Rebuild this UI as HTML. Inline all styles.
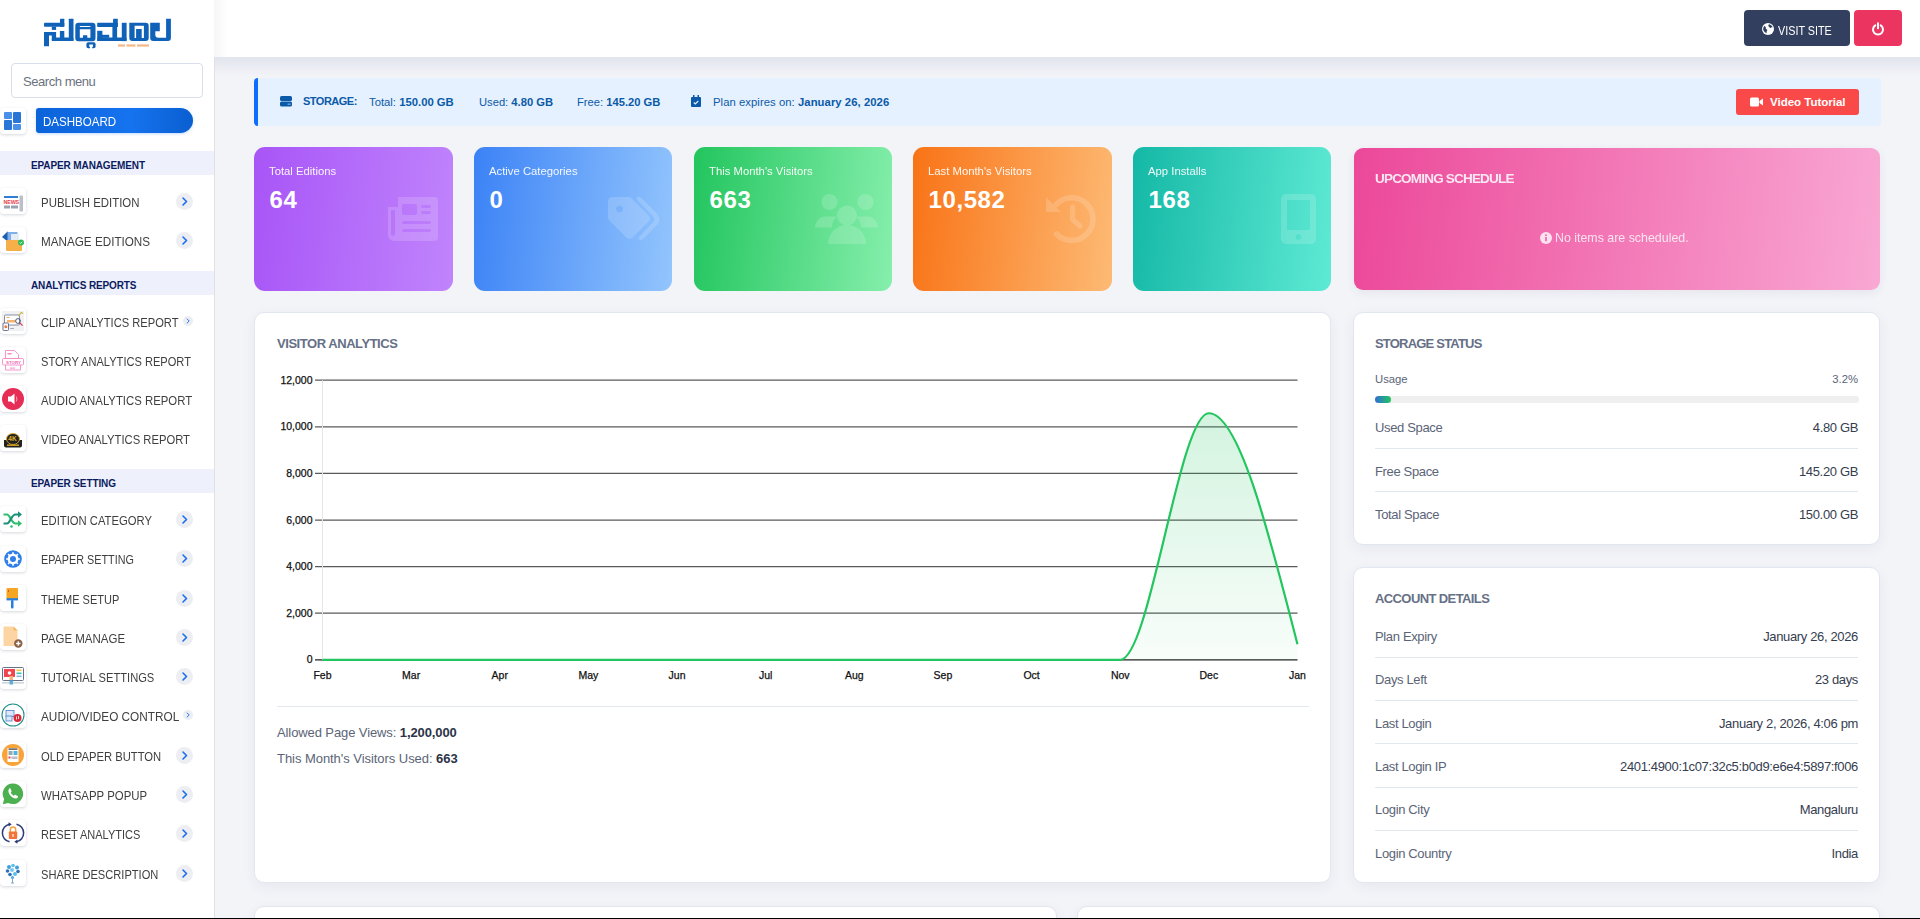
<!DOCTYPE html><html><head><meta charset="utf-8"><style>
*{box-sizing:border-box;margin:0;padding:0}
html,body{width:1920px;height:919px;overflow:hidden;background:#f3f4f8;font-family:"Liberation Sans",sans-serif}
body{position:relative}
.a{position:absolute}
.nw{white-space:nowrap}
#sb{position:absolute;left:0;top:0;width:215px;height:919px;background:#fff;border-right:1px solid #e0e1e5}
#search{position:absolute;left:11px;top:63px;width:192px;height:35px;border:1px solid #d8deea;border-radius:4px;background:#fff;font-size:13px;color:#6b7280;padding-left:11px;line-height:35px;letter-spacing:-0.45px}
.ico{position:absolute;left:0;width:26px;height:26px;background:#fff;border-radius:4px;box-shadow:0 1px 3px rgba(30,40,70,.18)}
.ico svg{position:absolute;left:0;top:0}
.mi{position:absolute;left:41px;font-size:13px;color:#3f3f3f;letter-spacing:0;white-space:nowrap;line-height:16px;transform:scaleX(.86);transform-origin:0 0}
.chev{position:absolute;border-radius:50%;background:#eceef2}
.chev svg{position:absolute;left:0;top:0}
.band{position:absolute;left:0;width:214px;height:24px;background:#eef1fb}
.band span{position:absolute;left:31px;top:9px;font-size:10px;font-weight:bold;color:#0b1b5e;letter-spacing:-0.12px;line-height:12px;white-space:nowrap}
#hdr{position:absolute;left:214px;top:0;width:1706px;height:57px;background:linear-gradient(90deg,#f6f6f7,#fff 14px);z-index:2}
#hdrsh{position:absolute;left:215px;top:57px;width:1705px;height:20px;background:linear-gradient(#e1e5ed,rgba(243,244,248,0));z-index:2}
.btn{position:absolute;border-radius:4px;color:#fff}
.card{position:absolute;background:#fff;border-radius:10px;border:1px solid #e1e6ef;box-shadow:0 4px 14px rgba(40,50,90,.06)}
.stat{position:absolute;top:147px;height:144px;border-radius:11px;color:#fff;overflow:hidden}
.stat .lbl{position:absolute;left:15px;top:18px;font-size:11.3px;line-height:13px;opacity:.93;white-space:nowrap}
.stat .num{position:absolute;left:15.5px;top:184px;font-size:24px;font-weight:bold;line-height:28px;white-space:nowrap;letter-spacing:.6px}
.ttl{position:absolute;font-size:13px;font-weight:bold;color:#667086;letter-spacing:-0.35px;white-space:nowrap;line-height:15px}
.row{position:absolute;left:21px;right:21px;height:16px;font-size:13px;line-height:16px;white-space:nowrap}
.row .l{position:absolute;left:0;top:0;color:#5b6477;letter-spacing:-0.35px}
.row .r{position:absolute;right:0;top:0;color:#353d4f;letter-spacing:-0.35px}
.div{position:absolute;left:21px;right:21px;height:1px;background:#e3e8ef}
</style></head><body>
<div id="hdrsh"></div><div id="hdr">
<div class="btn" style="left:1530px;top:10px;width:106px;height:36px;background:#333f5e;">
<svg class="a" style="left:18px;top:13px" width="12" height="12" viewBox="0 0 12 12"><circle cx="6" cy="6" r="6" fill="#fff"/><path d="M2.3 3.0c1 .3 1.7.9 1.5 1.9-.2.8.6 1.3 1.2 1.6.5.3.3 1.3-.2 1.8-.4.5-.3 1.2 0 1.9C3.2 9.7 1.9 8.4 1.2 6.7 1.1 5.4 1.5 4.1 2.3 3.0zM7.2 1.2c1.6.4 2.9 1.6 3.5 3.2-.6-.2-1.3-.1-1.7.4-.5.5-1.3.2-1.5-.5-.2-.6-.9-.8-1.1-1.4-.2-.7.2-1.3.8-1.7z" fill="#333f5e"/></svg>
<span class="a nw" style="left:34px;top:12.5px;font-size:13px;line-height:15px;transform:scaleX(.83);transform-origin:0 0">VISIT SITE</span></div>
<div class="btn" style="left:1640px;top:10px;width:48px;height:36px;background:#eb3460;">
<svg class="a" style="left:17px;top:12px" width="14" height="14" viewBox="0 0 14 14"><path d="M4.3 3.3A5 5 0 1 0 9.7 3.3" fill="none" stroke="#fff" stroke-width="2" stroke-linecap="round"/><path d="M7 1.3V6.3" stroke="#fff" stroke-width="2" stroke-linecap="round"/></svg></div>
</div>
<div id="sb">
<svg class="a" style="left:0;top:0" width="214" height="56" viewBox="0 0 214 56"><g fill="#0f62b8">
<rect x="44" y="22.8" width="20.3" height="4" rx="0.8"/><rect x="60" y="18.8" width="4.3" height="8" rx="0.5"/><rect x="51.8" y="26.5" width="4.3" height="3.4"/>
<rect x="68.8" y="18.8" width="4.7" height="22.2" rx="0.5"/><rect x="44" y="32" width="5" height="14.2" rx="0.5"/><rect x="44" y="32" width="12" height="3.6" rx="1.5"/>
<rect x="51.8" y="32" width="4.3" height="9"/><rect x="51.8" y="37.6" width="21.7" height="3.4" rx="1.2"/><rect x="59.9" y="31" width="4.4" height="10"/>
<path d="M78.3 22.8h14a3.2 3.2 0 0 1 3.2 3.2v12.2a3 3 0 0 1-3 3h-14.2a3 3 0 0 1-3-3V26a3.2 3.2 0 0 1 3.2-3.2zM79.8 29.3v8.4h3.2v-2.5h4.3v2.5h3.1v-8.4zM79.8 25.9v1.1h10.6v-1.1z" fill-rule="evenodd"/>
<path d="M88.2 42.2h5.6a1.8 1.8 0 0 1 1.8 1.8v2.5a1.8 1.8 0 0 1-1.8 1.8h-1.6v-1.5h0.8v-2.3h-3.8v2.3h0.8v1.5h-1.8a1.8 1.8 0 0 1-1.8-1.8v-2.5a1.8 1.8 0 0 1 1.8-1.8z"/>
<rect x="97.2" y="22.8" width="20.6" height="4.1" rx="0.6"/><rect x="113.1" y="18.8" width="4.7" height="8.2" rx="0.5"/><rect x="97.2" y="30.8" width="5.2" height="10.2"/>
<rect x="101.5" y="34.8" width="7.7" height="3"/><rect x="112.4" y="26" width="4.7" height="12"/><rect x="97.2" y="37.6" width="29.4" height="3.4" rx="1.5"/>
<rect x="121.8" y="22.8" width="4.8" height="18.3"/><path d="M129.3 22.8h16.4a3 3 0 0 1 3 3V38a3 3 0 0 1-3 3h-13.4a3 3 0 0 1-3-3z M134.6 25.7v12.2h1.5V29h5.6v8.9h2.2V25.7z" fill-rule="evenodd"/>
<path d="M150.2 22.8h9.6v8.4h-4.5v3.6a3 3 0 0 0 3 3h7.8V18.8h4.8V38a3 3 0 0 1-3 3h-14.7a3 3 0 0 1-3-3z"/>
</g><g fill="#f28a3a" opacity="0.6"><rect x="118" y="44.4" width="7" height="2.2"/><rect x="126.5" y="44.4" width="9" height="2.2"/><rect x="137" y="44.4" width="12" height="2.2"/></g></svg>
<div id="search">Search menu</div>
<div class="ico" style="top:108px"><svg width="26" height="26" viewBox="0 0 26 26">
<rect x="4" y="4" width="8" height="7" rx="1" fill="#4a90e8"/><rect x="4" y="12" width="8" height="10" rx="1" fill="#2a76d6"/>
<rect x="13" y="4" width="8" height="11" rx="1" fill="#2a76d6"/><rect x="13" y="16" width="8" height="6" rx="1" fill="#4a90e8"/></svg></div>
<div class="a" style="left:36px;top:108px;width:157px;height:25px;border-radius:3px 13px 13px 3px;background:linear-gradient(90deg,#0b63d8,#1673ef 60%,#0a5fd0);box-shadow:0 1px 3px rgba(13,110,253,.25)"></div>
<div class="mi" style="left:43px;top:114px;color:#fff;transform:scaleX(.888)">DASHBOARD</div>
<div class="band" style="top:151px"><span>EPAPER MANAGEMENT</span></div>
<div class="band" style="top:271px"><span>ANALYTICS REPORTS</span></div>
<div class="band" style="top:469px"><span>EPAPER SETTING</span></div>
<div class="ico" style="top:188px"><svg width="26" height="26" viewBox="0 0 26 26"><rect x="4" y="8" width="14" height="2" fill="#2f7fd6"/><text x="3.6" y="15.6" font-family="Liberation Sans" font-weight="bold" font-size="5.4" fill="#e8404a" letter-spacing="-0.2">NEWS</text>
<rect x="4" y="17.5" width="6" height="3" fill="#9aa3ad"/><rect x="11" y="17.5" width="7" height="3" fill="#9aa3ad"/><rect x="19.5" y="7.5" width="3.5" height="16" rx="0.8" fill="#b9c0c9"/></svg></div>
<div class="mi" style="top:195.05px;transform:scaleX(0.88)">PUBLISH EDITION</div>
<div class="chev" style="left:176px;top:192.80px;width:17px;height:17px"><svg width="17" height="17" viewBox="0 0 17 17"><path d="M7 5l3.5 3.5L7 12" fill="none" stroke="#1a6ef0" stroke-width="1.6" stroke-linecap="round" stroke-linejoin="round"/></svg></div>
<div class="ico" style="top:227px"><svg width="26" height="26" viewBox="0 0 26 26"><path d="M2 10l5.5-5.5L12 9l-5 5z" fill="#1f5fb0"/><rect x="7.5" y="5" width="10" height="9" fill="#7fb0ea"/><rect x="11" y="7" width="8" height="8" fill="#e4ecf6"/>
<rect x="6" y="13" width="16" height="11" rx="1.2" fill="#f5b04a"/><circle cx="21" cy="15.5" r="3" fill="#2dbb55"/><path d="M19.6 15.5l1 1 1.8-1.8" stroke="#fff" stroke-width="0.9" fill="none"/></svg></div>
<div class="mi" style="top:234.25px;transform:scaleX(0.899)">MANAGE EDITIONS</div>
<div class="chev" style="left:176px;top:232.00px;width:17px;height:17px"><svg width="17" height="17" viewBox="0 0 17 17"><path d="M7 5l3.5 3.5L7 12" fill="none" stroke="#1a6ef0" stroke-width="1.6" stroke-linecap="round" stroke-linejoin="round"/></svg></div>
<div class="ico" style="top:308px"><svg width="26" height="26" viewBox="0 0 26 26"><rect x="2" y="3" width="22" height="20" fill="#f0f1f3"/><rect x="4.5" y="7" width="15" height="10" rx="1" fill="#fff" stroke="#6a7390" stroke-width="0.8"/><rect x="6.5" y="9" width="3" height="1" fill="#f4a953"/><rect x="7" y="12" width="8" height="2.5" fill="#f7b36a"/>
<rect x="3" y="15" width="5.5" height="7.5" rx="1" fill="#fff" stroke="#4a5688" stroke-width="0.8"/><circle cx="5.8" cy="18.8" r="1.5" fill="#f07a3a"/><circle cx="18" cy="13" r="2.4" fill="none" stroke="#3b4a6a" stroke-width="0.9"/><path d="M19.8 14.8l2.8 2.8" stroke="#e0334a" stroke-width="1.2"/><path d="M18.5 8l2.8-3.5 1.7 1" stroke="#c9b23a" stroke-width="1.2" fill="none"/><rect x="10" y="20" width="4" height="0.8" fill="#99a"/></svg></div>
<div class="mi" style="top:315.05px;transform:scaleX(0.857)">CLIP ANALYTICS REPORT</div>
<div class="chev" style="left:182.5px;top:316.30px;width:10px;height:10px"><svg width="10" height="10" viewBox="0 0 17 17"><path d="M7 5l3.5 3.5L7 12" fill="none" stroke="#1a6ef0" stroke-width="1.6" stroke-linecap="round" stroke-linejoin="round"/></svg></div>
<div class="ico" style="top:347px"><svg width="26" height="26" viewBox="0 0 26 26"><path d="M5.5 3.5h9l4 4v4h-13z" fill="none" stroke="#f28bc6" stroke-width="0.9"/><rect x="7.5" y="6" width="4" height="1.5" fill="#f28bc6"/>
<rect x="2.5" y="11.5" width="21" height="6.5" rx="1" fill="none" stroke="#f28bc6" stroke-width="0.9"/><text x="6" y="16.6" font-family="Liberation Sans" font-weight="bold" font-size="4.4" fill="#ee6bb3">STORY</text>
<path d="M5.5 18v5h15v-5" fill="none" stroke="#f28bc6" stroke-width="0.9"/><rect x="10" y="20.6" width="5" height="1" fill="#f28bc6"/></svg></div>
<div class="mi" style="top:354.25px;transform:scaleX(0.853)">STORY ANALYTICS REPORT</div>
<div class="ico" style="top:386px"><svg width="26" height="26" viewBox="0 0 26 26"><circle cx="13" cy="13" r="11" fill="#e52d56"/><rect x="8" y="10.5" width="3" height="5" fill="#fff"/><path d="M11 10.5l3.5-3v11l-3.5-3z" fill="#fff"/><path d="M16.3 10.5q1.3 2.5 0 5" stroke="#f5b0c0" stroke-width="0.9" fill="none"/></svg></div>
<div class="mi" style="top:393.45px;transform:scaleX(0.874)">AUDIO ANALYTICS REPORT</div>
<div class="ico" style="top:425px"><svg width="26" height="26" viewBox="0 0 26 26"><path d="M4 15h18v5.5a2 2 0 0 1-2 2H6a2 2 0 0 1-2-2z" fill="#222"/><ellipse cx="13" cy="14" rx="6.5" ry="5.5" fill="#222" stroke="#d7a623" stroke-width="0.9"/>
<text x="8.3" y="16.3" font-family="Liberation Sans" font-weight="bold" font-size="6.5" fill="#e8b52a">4K</text><rect x="7" y="19.5" width="12" height="1.4" fill="#d7a623"/></svg></div>
<div class="mi" style="top:432.15px;transform:scaleX(0.865)">VIDEO ANALYTICS REPORT</div>
<div class="ico" style="top:506px"><svg width="26" height="26" viewBox="0 0 26 26"><path d="M3.5 8.5h3.5c3 0 4.5 9 8.5 9h3" stroke="#2cc06a" stroke-width="2.2" fill="none"/><path d="M3.5 17.5h3.5c3 0 4.5-9 8.5-9h3" stroke="#1e8f7a" stroke-width="2.2" fill="none"/>
<path d="M18 5.2l4 3.3-4 3.3z" fill="#1e8f7a"/><path d="M18 14.2l4 3.3-4 3.3z" fill="#2cc06a"/><circle cx="11.5" cy="20.5" r="1.3" fill="#2cc06a"/></svg></div>
<div class="mi" style="top:513.35px;transform:scaleX(0.866)">EDITION CATEGORY</div>
<div class="chev" style="left:176px;top:511.10px;width:17px;height:17px"><svg width="17" height="17" viewBox="0 0 17 17"><path d="M7 5l3.5 3.5L7 12" fill="none" stroke="#1a6ef0" stroke-width="1.6" stroke-linecap="round" stroke-linejoin="round"/></svg></div>
<div class="ico" style="top:546px"><svg width="26" height="26" viewBox="0 0 26 26"><circle cx="13" cy="13" r="8.8" fill="#2f7fe8"/><path d="M18.11,11.25 L18.33,12.16 L19.86,12.24 L19.86,13.76 L18.33,13.84 L18.11,14.75 L17.85,15.38 L17.37,16.17 L18.38,17.31 L17.31,18.38 L16.17,17.37 L15.38,17.85 L14.75,18.11 L13.84,18.33 L13.76,19.86 L12.24,19.86 L12.16,18.33 L11.25,18.11 L10.62,17.85 L9.83,17.37 L8.69,18.38 L7.62,17.31 L8.63,16.17 L8.15,15.38 L7.89,14.75 L7.67,13.84 L6.14,13.76 L6.14,12.24 L7.67,12.16 L7.89,11.25 L8.15,10.62 L8.63,9.83 L7.62,8.69 L8.69,7.62 L9.83,8.63 L10.62,8.15 L11.25,7.89 L12.16,7.67 L12.24,6.14 L13.76,6.14 L13.84,7.67 L14.75,7.89 L15.38,8.15 L16.17,8.63 L17.31,7.62 L18.38,8.69 L17.37,9.83 L17.85,10.62Z" fill="#fff"/><circle cx="13" cy="13" r="3" fill="#2f7fe8"/></svg></div>
<div class="mi" style="top:552.45px;transform:scaleX(0.831)">EPAPER SETTING</div>
<div class="chev" style="left:176px;top:550.20px;width:17px;height:17px"><svg width="17" height="17" viewBox="0 0 17 17"><path d="M7 5l3.5 3.5L7 12" fill="none" stroke="#1a6ef0" stroke-width="1.6" stroke-linecap="round" stroke-linejoin="round"/></svg></div>
<div class="ico" style="top:585px"><svg width="26" height="26" viewBox="0 0 26 26"><rect x="6.5" y="3" width="11.5" height="11" rx="1" fill="#f5a623"/><rect x="6.5" y="13.2" width="11.5" height="2.2" fill="#2a7de0"/><rect x="11" y="15" width="2.5" height="8.5" rx="1" fill="#2a7de0"/><rect x="8" y="5" width="0.8" height="2" fill="#d0452f"/></svg></div>
<div class="mi" style="top:592.35px;transform:scaleX(0.847)">THEME SETUP</div>
<div class="chev" style="left:176px;top:590.10px;width:17px;height:17px"><svg width="17" height="17" viewBox="0 0 17 17"><path d="M7 5l3.5 3.5L7 12" fill="none" stroke="#1a6ef0" stroke-width="1.6" stroke-linecap="round" stroke-linejoin="round"/></svg></div>
<div class="ico" style="top:624px"><svg width="26" height="26" viewBox="0 0 26 26"><path d="M3.5 2.5h10l4 4v15.5h-14z" fill="#fdd4a4"/><path d="M13.5 2.5l4 4h-4z" fill="#f7b35f"/><circle cx="18.3" cy="19.5" r="4.2" fill="#8a6246"/><path d="M18.3 17.3v4.4M16.1 19.5h4.4" stroke="#fff" stroke-width="1.3"/></svg></div>
<div class="mi" style="top:631.05px;transform:scaleX(0.884)">PAGE MANAGE</div>
<div class="chev" style="left:176px;top:628.80px;width:17px;height:17px"><svg width="17" height="17" viewBox="0 0 17 17"><path d="M7 5l3.5 3.5L7 12" fill="none" stroke="#1a6ef0" stroke-width="1.6" stroke-linecap="round" stroke-linejoin="round"/></svg></div>
<div class="ico" style="top:663px"><svg width="26" height="26" viewBox="0 0 26 26"><rect x="2.5" y="4.5" width="21" height="13" rx="1" fill="#fff" stroke="#667089" stroke-width="1"/><rect x="4" y="6" width="11" height="8" fill="#ef4550"/><circle cx="9.5" cy="10" r="1.8" fill="#fff"/>
<rect x="16.5" y="6.5" width="5" height="1.6" fill="#f5c342"/><rect x="16.5" y="9.5" width="5" height="1.6" fill="#3cc3b0"/><rect x="16.5" y="12.5" width="5" height="1.6" fill="#8fb6e8"/><rect x="9.5" y="13" width="3.5" height="4" fill="#f2b27a"/><rect x="9.5" y="17.5" width="3.5" height="4" fill="#4cb0e0"/><rect x="2" y="19.5" width="22" height="0.8" fill="#9ab"/></svg></div>
<div class="mi" style="top:670.25px;transform:scaleX(0.857)">TUTORIAL SETTINGS</div>
<div class="chev" style="left:176px;top:668.00px;width:17px;height:17px"><svg width="17" height="17" viewBox="0 0 17 17"><path d="M7 5l3.5 3.5L7 12" fill="none" stroke="#1a6ef0" stroke-width="1.6" stroke-linecap="round" stroke-linejoin="round"/></svg></div>
<div class="ico" style="top:702px"><svg width="26" height="26" viewBox="0 0 26 26"><circle cx="13" cy="13" r="11" fill="#fff" stroke="#1f8f8a" stroke-width="1.1"/><rect x="6" y="8.5" width="8" height="6" fill="#dbe8f7" stroke="#4b80c8" stroke-width="0.8"/><rect x="6" y="14" width="6" height="5" fill="#dbe8f7" stroke="#4b80c8" stroke-width="0.8"/>
<circle cx="17.5" cy="16" r="4" fill="#d72b3a"/><path d="M16.5 14.5v3M18.5 14v3" stroke="#fff" stroke-width="0.8"/></svg></div>
<div class="mi" style="top:709.15px;transform:scaleX(0.907)">AUDIO/VIDEO CONTROL</div>
<div class="chev" style="left:182.5px;top:710.40px;width:10px;height:10px"><svg width="10" height="10" viewBox="0 0 17 17"><path d="M7 5l3.5 3.5L7 12" fill="none" stroke="#1a6ef0" stroke-width="1.6" stroke-linecap="round" stroke-linejoin="round"/></svg></div>
<div class="ico" style="top:742px"><svg width="26" height="26" viewBox="0 0 26 26"><circle cx="13" cy="13" r="11" fill="#f9a43a"/><rect x="7.5" y="6" width="11" height="14" fill="#fff"/><rect x="8.5" y="6.5" width="9" height="1.2" fill="#333"/><rect x="8.5" y="9" width="4" height="4" fill="#9aa"/><rect x="13.5" y="9" width="4" height="4" fill="#4fb3e6"/><rect x="8.5" y="14.5" width="2" height="2" fill="#e8404a"/><rect x="11.5" y="14.5" width="6" height="2.5" fill="#bbc"/></svg></div>
<div class="mi" style="top:749.35px;transform:scaleX(0.865)">OLD EPAPER BUTTON</div>
<div class="chev" style="left:176px;top:747.10px;width:17px;height:17px"><svg width="17" height="17" viewBox="0 0 17 17"><path d="M7 5l3.5 3.5L7 12" fill="none" stroke="#1a6ef0" stroke-width="1.6" stroke-linecap="round" stroke-linejoin="round"/></svg></div>
<div class="ico" style="top:781px"><svg width="26" height="26" viewBox="0 0 26 26"><path d="M13 2.5a10.3 10.3 0 0 0-8.9 15.5L2.8 23.3l5.4-1.3A10.3 10.3 0 1 0 13 2.5z" fill="#4caf50"/><path d="M9.3 7.5c.4-.3 1-.2 1.2.2l1 2.2c.2.4 0 .8-.3 1.1l-.5.5c.6 1.3 1.8 2.6 3.2 3.2l.6-.6c.3-.3.7-.4 1.1-.2l2.1 1c.4.2.5.7.3 1.1-.5 1-1.4 1.6-2.4 1.5-3.4-.4-6.8-3.8-7.2-7.2-.1-1 .4-2 .9-2.8z" fill="#fff"/></svg></div>
<div class="mi" style="top:788.35px;transform:scaleX(0.878)">WHATSAPP POPUP</div>
<div class="chev" style="left:176px;top:786.10px;width:17px;height:17px"><svg width="17" height="17" viewBox="0 0 17 17"><path d="M7 5l3.5 3.5L7 12" fill="none" stroke="#1a6ef0" stroke-width="1.6" stroke-linecap="round" stroke-linejoin="round"/></svg></div>
<div class="ico" style="top:820px"><svg width="26" height="26" viewBox="0 0 26 26"><path d="M9.5 4.2A9 9 0 0 0 9.5 21.8" stroke="#2c3a78" stroke-width="1.5" fill="none"/><path d="M16.5 21.8A9 9 0 0 0 16.5 4.2" stroke="#2c3a78" stroke-width="1.5" fill="none"/><path d="M8.5 2.2l3.2 2-3 2.2z" fill="#2c3a78"/><path d="M17.5 23.8l-3.2-2 3-2.2z" fill="#2c3a78"/>
<path d="M10.3 12v-2.2a2.7 2.7 0 0 1 5.4 0V12" stroke="#f5a040" stroke-width="1.5" fill="none"/><rect x="8.8" y="11.5" width="8.4" height="7.5" rx="1" fill="#f2743a"/><rect x="12.4" y="14" width="1.2" height="2.8" fill="#fff"/></svg></div>
<div class="mi" style="top:827.15px;transform:scaleX(0.847)">RESET ANALYTICS</div>
<div class="chev" style="left:176px;top:824.90px;width:17px;height:17px"><svg width="17" height="17" viewBox="0 0 17 17"><path d="M7 5l3.5 3.5L7 12" fill="none" stroke="#1a6ef0" stroke-width="1.6" stroke-linecap="round" stroke-linejoin="round"/></svg></div>
<div class="ico" style="top:860px"><svg width="26" height="26" viewBox="0 0 26 26"><g fill="#3fa0e0"><circle cx="9" cy="7" r="2"/><circle cx="13" cy="5.5" r="1.8" fill="#5bc0eb"/><circle cx="17" cy="7.5" r="2"/><circle cx="7.5" cy="11" r="1.8" fill="#2d6fb7"/><circle cx="12" cy="10" r="2" fill="#79c8f0"/><circle cx="18" cy="11.5" r="1.8" fill="#2d6fb7"/>
<circle cx="10" cy="14.5" r="1.8" fill="#2d6fb7"/><circle cx="15" cy="14" r="2" fill="#5bc0eb"/><circle cx="12.5" cy="17.5" r="1.5"/></g><path d="M12.5 17v6M11 23h3" stroke="#7aa8d0" stroke-width="1"/></svg></div>
<div class="mi" style="top:867.25px;transform:scaleX(0.855)">SHARE DESCRIPTION</div>
<div class="chev" style="left:176px;top:865.00px;width:17px;height:17px"><svg width="17" height="17" viewBox="0 0 17 17"><path d="M7 5l3.5 3.5L7 12" fill="none" stroke="#1a6ef0" stroke-width="1.6" stroke-linecap="round" stroke-linejoin="round"/></svg></div>
</div>
<div class="a" style="left:254px;top:78px;width:1627px;height:48px;background:#e5f1fe;border-left:4px solid #0d6efd;border-radius:4px"></div>
<svg class="a" style="left:280px;top:96px" width="12" height="11" viewBox="0 0 12 11"><rect x="0" y="0" width="12" height="5" rx="1.5" fill="#0b5aa8"/><rect x="0" y="5.6" width="12" height="5" rx="1.5" fill="#0b5aa8"/><circle cx="8.2" cy="8.1" r="0.6" fill="#e6f1fd"/><circle cx="10" cy="8.1" r="0.6" fill="#e6f1fd"/></svg>
<div class="a nw" style="left:303px;top:95px;font-size:11px;line-height:13px;color:#0b5aa8">
<b style="letter-spacing:-0.5px">STORAGE:</b></div>
<div class="a nw" style="left:369px;top:95.5px;font-size:11.3px;line-height:13px;color:#0b5aa8">Total: <b>150.00 GB</b></div>
<div class="a nw" style="left:479px;top:95.5px;font-size:11.2px;line-height:13px;color:#0b5aa8">Used: <b>4.80 GB</b></div>
<div class="a nw" style="left:577px;top:95.5px;font-size:11.2px;line-height:13px;color:#0b5aa8">Free: <b>145.20 GB</b></div>
<svg class="a" style="left:691px;top:95px" width="10" height="12" viewBox="0 0 10 12"><rect x="0" y="2" width="10" height="10" rx="1" fill="#0b5aa8"/><rect x="2" y="0" width="1.5" height="3" fill="#0b5aa8"/><rect x="6.5" y="0" width="1.5" height="3" fill="#0b5aa8"/><path d="M2.8 7.5l1.5 1.5 3-3" stroke="#e6f1fd" stroke-width="1.1" fill="none"/></svg>
<div class="a nw" style="left:713px;top:95.5px;font-size:11.3px;line-height:13px;color:#0b5aa8;letter-spacing:0.05px">Plan expires on: <b>January 26, 2026</b></div>
<div class="btn" style="left:1736px;top:89px;width:123px;height:26px;background:#fa4949;border-radius:3px">
<svg class="a" style="left:14px;top:8px" width="13" height="10" viewBox="0 0 13 10"><rect x="0" y="0.5" width="9" height="9" rx="1.5" fill="#fff"/><path d="M9.5 4l3.5-2.5v7L9.5 6z" fill="#fff"/></svg>
<span class="a nw" style="left:34px;top:6px;font-size:11.6px;line-height:14px;font-weight:bold;letter-spacing:-0.05px">Video Tutorial</span></div>
<div class="stat" style="left:254px;width:199px;background:linear-gradient(96deg,#a855f7,#c084fc)"><div class="lbl">Total Editions</div><div class="num" style="top:38.5px">64</div><div style="opacity:.16"><svg class="a" style="left:134px;top:50px" width="50" height="44" viewBox="0 0 50 44"><defs><mask id="mn"><rect width="50" height="44" fill="#fff"/><g fill="#000"><rect x="14" y="7" width="15" height="11" rx="2"/><rect x="33" y="8" width="10" height="3" rx="1.5"/><rect x="33" y="14" width="10" height="3" rx="1.5"/><rect x="14" y="24" width="29" height="3" rx="1.5"/><rect x="14" y="32" width="29" height="3" rx="1.5"/><path d="M3 13h4v24a2 2 0 0 1-4 0z"/></g></mask></defs><path d="M10 0h36a4 4 0 0 1 4 4v36a4 4 0 0 1-4 4H6a6 6 0 0 1-6-6V10h10z" fill="#fff" mask="url(#mn)"/></svg></div></div>
<div class="stat" style="left:474px;width:198px;background:linear-gradient(96deg,#3b82f6,#93c5fd)"><div class="lbl">Active Categories</div><div class="num" style="top:38.5px">0</div><div style="opacity:.16"><svg class="a" style="left:134px;top:50px" width="54" height="46" viewBox="0 0 54 46"><defs><mask id="mt"><rect width="54" height="46" fill="#fff"/><circle cx="10.5" cy="11" r="3" fill="#000"/></mask></defs><path transform="scale(1.1)" d="M0 4a4 4 0 0 1 4-4h14.5a4 4 0 0 1 2.8 1.2l15.5 15.5a4 4 0 0 1 0 5.6L22.3 36.8a4 4 0 0 1-5.6 0L1.2 21.3A4 4 0 0 1 0 18.5z" fill="#fff" mask="url(#mt)"/><path d="M31 1.8L46.5 17.3Q51.5 22.3 46.5 27.3L33 41" stroke="#fff" stroke-width="4.6" fill="none" stroke-linecap="round"/></svg></div></div>
<div class="stat" style="left:694px;width:198px;background:linear-gradient(96deg,#22c55e,#86efac)"><div class="lbl">This Month's Visitors</div><div class="num" style="top:38.5px">663</div><div style="opacity:.16"><svg class="a" style="left:121px;top:47px" width="63" height="50" viewBox="0 0 63 50"><g fill="#fff"><circle cx="14.5" cy="8" r="8"/><circle cx="50.5" cy="8" r="8"/><circle cx="32" cy="21.5" r="10"/><path d="M0 33.5a11 11 0 0 1 11-11h11a14 14 0 0 0-5 11z"/><path d="M63 33.5a11 11 0 0 0-11-11H41a14 14 0 0 1 5 11z"/><path d="M13 50a19 19 0 0 1 38 0z"/></g></svg></div></div>
<div class="stat" style="left:913px;width:199px;background:linear-gradient(96deg,#f97316,#fdba74)"><div class="lbl">Last Month's Visitors</div><div class="num" style="top:38.5px">10,582</div><div style="opacity:.16"><svg class="a" style="left:132px;top:46px" width="54" height="52" viewBox="0 0 54 52"><path d="M11.5 11.2A21.3 21.3 0 1 1 11.5 41" stroke="#fff" stroke-width="5.6" fill="none" stroke-linecap="round"/><path d="M1 4v15h15z" fill="#fff"/><path d="M27.5 14v12.5l7.5 6.5" stroke="#fff" stroke-width="5" fill="none" stroke-linecap="round"/></svg></div></div>
<div class="stat" style="left:1133px;width:198px;background:linear-gradient(96deg,#14b8a6,#5eead4)"><div class="lbl">App Installs</div><div class="num" style="top:38.5px">168</div><div style="opacity:.16"><svg class="a" style="left:148px;top:47px" width="35" height="50" viewBox="0 0 35 50"><path d="M5 0h25a5 5 0 0 1 5 5v40a5 5 0 0 1-5 5H5a5 5 0 0 1-5-5V5a5 5 0 0 1 5-5zM6 6v30h23V6zM17.5 40.2a2.8 2.8 0 1 0 0.01 0z" fill="#fff" fill-rule="evenodd"/></svg></div></div>
<div class="stat" style="left:1354px;top:148px;width:526px;height:142px;border-radius:9px;box-shadow:0 3px 10px rgba(60,40,80,.07);background:linear-gradient(96deg,#ec4899,#f9a8d4)">
<div class="a nw" style="left:21px;top:23px;font-size:13.5px;line-height:16px;font-weight:bold;letter-spacing:-0.8px;opacity:.86">UPCOMING SCHEDULE</div>
<svg class="a" style="left:186px;top:84px" width="12" height="12" viewBox="0 0 12 12"><circle cx="6" cy="6" r="6" fill="#fff" opacity=".8"/><rect x="5.2" y="5" width="1.6" height="4.2" fill="#ef5ea8"/><circle cx="6" cy="3.2" r="0.9" fill="#ef5ea8"/></svg>
<div class="a nw" style="left:201px;top:83px;font-size:12.4px;line-height:15px;opacity:.8;letter-spacing:0px">No items are scheduled.</div></div>
<div class="card" style="left:254px;top:312px;width:1077px;height:571px">
<div class="ttl" style="left:22px;top:23px;letter-spacing:-0.45px">VISITOR ANALYTICS</div>
</div>
<svg class="a" style="left:0;top:0" width="1920" height="919" viewBox="0 0 1920 919"><defs><linearGradient id="gf" x1="0" y1="0" x2="0" y2="1"><stop offset="0" stop-color="#22c55e" stop-opacity=".2"/><stop offset="1" stop-color="#22c55e" stop-opacity=".03"/></linearGradient></defs><line x1="315" y1="659.80" x2="1297.5" y2="659.80" stroke="#222" stroke-width="1.25"/><text x="312.5" y="663.40" text-anchor="end" font-family="Liberation Sans" font-size="10.5" fill="#111" stroke="#111" stroke-width="0.25">0</text><line x1="315" y1="613.20" x2="1297.5" y2="613.20" stroke="#5a5a5a" stroke-width="1.25"/><text x="312.5" y="616.80" text-anchor="end" font-family="Liberation Sans" font-size="10.5" fill="#111" stroke="#111" stroke-width="0.25">2,000</text><line x1="315" y1="566.60" x2="1297.5" y2="566.60" stroke="#5a5a5a" stroke-width="1.25"/><text x="312.5" y="570.20" text-anchor="end" font-family="Liberation Sans" font-size="10.5" fill="#111" stroke="#111" stroke-width="0.25">4,000</text><line x1="315" y1="520.00" x2="1297.5" y2="520.00" stroke="#5a5a5a" stroke-width="1.25"/><text x="312.5" y="523.60" text-anchor="end" font-family="Liberation Sans" font-size="10.5" fill="#111" stroke="#111" stroke-width="0.25">6,000</text><line x1="315" y1="473.40" x2="1297.5" y2="473.40" stroke="#5a5a5a" stroke-width="1.25"/><text x="312.5" y="477.00" text-anchor="end" font-family="Liberation Sans" font-size="10.5" fill="#111" stroke="#111" stroke-width="0.25">8,000</text><line x1="315" y1="426.80" x2="1297.5" y2="426.80" stroke="#5a5a5a" stroke-width="1.25"/><text x="312.5" y="430.40" text-anchor="end" font-family="Liberation Sans" font-size="10.5" fill="#111" stroke="#111" stroke-width="0.25">10,000</text><line x1="315" y1="380.20" x2="1297.5" y2="380.20" stroke="#5a5a5a" stroke-width="1.25"/><text x="312.5" y="383.80" text-anchor="end" font-family="Liberation Sans" font-size="10.5" fill="#111" stroke="#111" stroke-width="0.25">12,000</text><line x1="322.5" y1="380.2" x2="322.5" y2="659.8" stroke="#e6e6e6" stroke-width="1"/><text x="322.5" y="679" text-anchor="middle" font-family="Liberation Sans" font-size="10.5" fill="#111" stroke="#111" stroke-width="0.25">Feb</text><text x="411.1363636363636" y="679" text-anchor="middle" font-family="Liberation Sans" font-size="10.5" fill="#111" stroke="#111" stroke-width="0.25">Mar</text><text x="499.77272727272725" y="679" text-anchor="middle" font-family="Liberation Sans" font-size="10.5" fill="#111" stroke="#111" stroke-width="0.25">Apr</text><text x="588.409090909091" y="679" text-anchor="middle" font-family="Liberation Sans" font-size="10.5" fill="#111" stroke="#111" stroke-width="0.25">May</text><text x="677.0454545454545" y="679" text-anchor="middle" font-family="Liberation Sans" font-size="10.5" fill="#111" stroke="#111" stroke-width="0.25">Jun</text><text x="765.6818181818182" y="679" text-anchor="middle" font-family="Liberation Sans" font-size="10.5" fill="#111" stroke="#111" stroke-width="0.25">Jul</text><text x="854.3181818181819" y="679" text-anchor="middle" font-family="Liberation Sans" font-size="10.5" fill="#111" stroke="#111" stroke-width="0.25">Aug</text><text x="942.9545454545455" y="679" text-anchor="middle" font-family="Liberation Sans" font-size="10.5" fill="#111" stroke="#111" stroke-width="0.25">Sep</text><text x="1031.590909090909" y="679" text-anchor="middle" font-family="Liberation Sans" font-size="10.5" fill="#111" stroke="#111" stroke-width="0.25">Oct</text><text x="1120.2272727272727" y="679" text-anchor="middle" font-family="Liberation Sans" font-size="10.5" fill="#111" stroke="#111" stroke-width="0.25">Nov</text><text x="1208.8636363636365" y="679" text-anchor="middle" font-family="Liberation Sans" font-size="10.5" fill="#111" stroke="#111" stroke-width="0.25">Dec</text><text x="1297.5" y="679" text-anchor="middle" font-family="Liberation Sans" font-size="10.5" fill="#111" stroke="#111" stroke-width="0.25">Jan</text><path d="M322.50,659.80 C352.05,659.80 381.59,659.80 411.14,659.80 C440.68,659.80 470.23,659.80 499.77,659.80 C529.32,659.80 558.86,659.80 588.41,659.80 C617.95,659.80 647.50,659.80 677.05,659.80 C706.59,659.80 736.14,659.80 765.68,659.80 C795.23,659.80 824.77,659.80 854.32,659.80 C883.86,659.80 913.41,659.80 942.95,659.80 C972.50,659.80 1002.05,659.80 1031.59,659.80 C1061.14,659.80 1090.68,659.80 1120.23,659.80 C1149.77,659.80 1179.32,413.24 1208.86,413.24 C1238.41,413.24 1267.95,528.80 1297.50,644.35 L1297,659.8 L322,659.8 Z" fill="url(#gf)"/><path d="M322.50,659.80 C352.05,659.80 381.59,659.80 411.14,659.80 C440.68,659.80 470.23,659.80 499.77,659.80 C529.32,659.80 558.86,659.80 588.41,659.80 C617.95,659.80 647.50,659.80 677.05,659.80 C706.59,659.80 736.14,659.80 765.68,659.80 C795.23,659.80 824.77,659.80 854.32,659.80 C883.86,659.80 913.41,659.80 942.95,659.80 C972.50,659.80 1002.05,659.80 1031.59,659.80 C1061.14,659.80 1090.68,659.80 1120.23,659.80 C1149.77,659.80 1179.32,413.24 1208.86,413.24 C1238.41,413.24 1267.95,528.80 1297.50,644.35" fill="none" stroke="#22c55e" stroke-width="2.2"/></svg>
<div class="a" style="left:277px;top:706px;width:1032px;height:1px;background:#e3e8ef"></div>
<div class="a nw" style="left:277px;top:725px;font-size:13px;line-height:16px;color:#5b6477;letter-spacing:-0.1px">Allowed Page Views: <b style="color:#2c3448">1,200,000</b></div>
<div class="a nw" style="left:277px;top:751px;font-size:13px;line-height:16px;color:#5b6477;letter-spacing:-0.05px">This Month's Visitors Used: <b style="color:#2c3448">663</b></div>
<div class="card" style="left:1353px;top:312px;width:527px;height:233px">
<div class="ttl" style="left:21px;top:23px;letter-spacing:-0.8px">STORAGE STATUS</div>
<div class="a nw" style="left:21px;top:60px;font-size:11.3px;line-height:13px;color:#5b6477">Usage</div>
<div class="a nw" style="right:21px;top:60px;font-size:11.3px;line-height:13px;color:#5b6477">3.2%</div>
<div class="a" style="left:21px;top:83px;width:484px;height:7px;border-radius:4px;background:#efefef"></div>
<div class="a" style="left:21px;top:83px;width:16px;height:7px;border-radius:4px;background:linear-gradient(90deg,#2f6fd6,#22c55e)"></div>
<div class="row" style="top:107px"><span class="l">Used Space</span><span class="r">4.80 GB</span></div>
<div class="div" style="top:135px"></div>
<div class="row" style="top:151px"><span class="l">Free Space</span><span class="r">145.20 GB</span></div>
<div class="div" style="top:178px"></div>
<div class="row" style="top:194px"><span class="l">Total Space</span><span class="r">150.00 GB</span></div>
</div>
<div class="card" style="left:1353px;top:567px;width:527px;height:316px">
<div class="ttl" style="left:21px;top:23px;letter-spacing:-0.6px">ACCOUNT DETAILS</div>
<div class="row" style="top:60.5px"><span class="l">Plan Expiry</span><span class="r">January 26, 2026</span></div>
<div class="row" style="top:103.5px"><span class="l">Days Left</span><span class="r">23 days</span></div>
<div class="row" style="top:147.5px"><span class="l">Last Login</span><span class="r">January 2, 2026, 4:06 pm</span></div>
<div class="row" style="top:190.5px"><span class="l">Last Login IP</span><span class="r">2401:4900:1c07:32c5:b0d9:e6e4:5897:f006</span></div>
<div class="row" style="top:233.5px"><span class="l">Login City</span><span class="r">Mangaluru</span></div>
<div class="row" style="top:277.5px"><span class="l">Login Country</span><span class="r">India</span></div>
<div class="div" style="top:89px"></div>
<div class="div" style="top:132px"></div>
<div class="div" style="top:175px"></div>
<div class="div" style="top:219px"></div>
<div class="div" style="top:262px"></div>
</div>
<div class="card" style="left:254px;top:906px;width:803px;height:100px"></div>
<div class="card" style="left:1077px;top:906px;width:803px;height:100px"></div>
<div class="a" style="left:0;top:918px;width:1920px;height:1px;background:#000"></div>
</body></html>
